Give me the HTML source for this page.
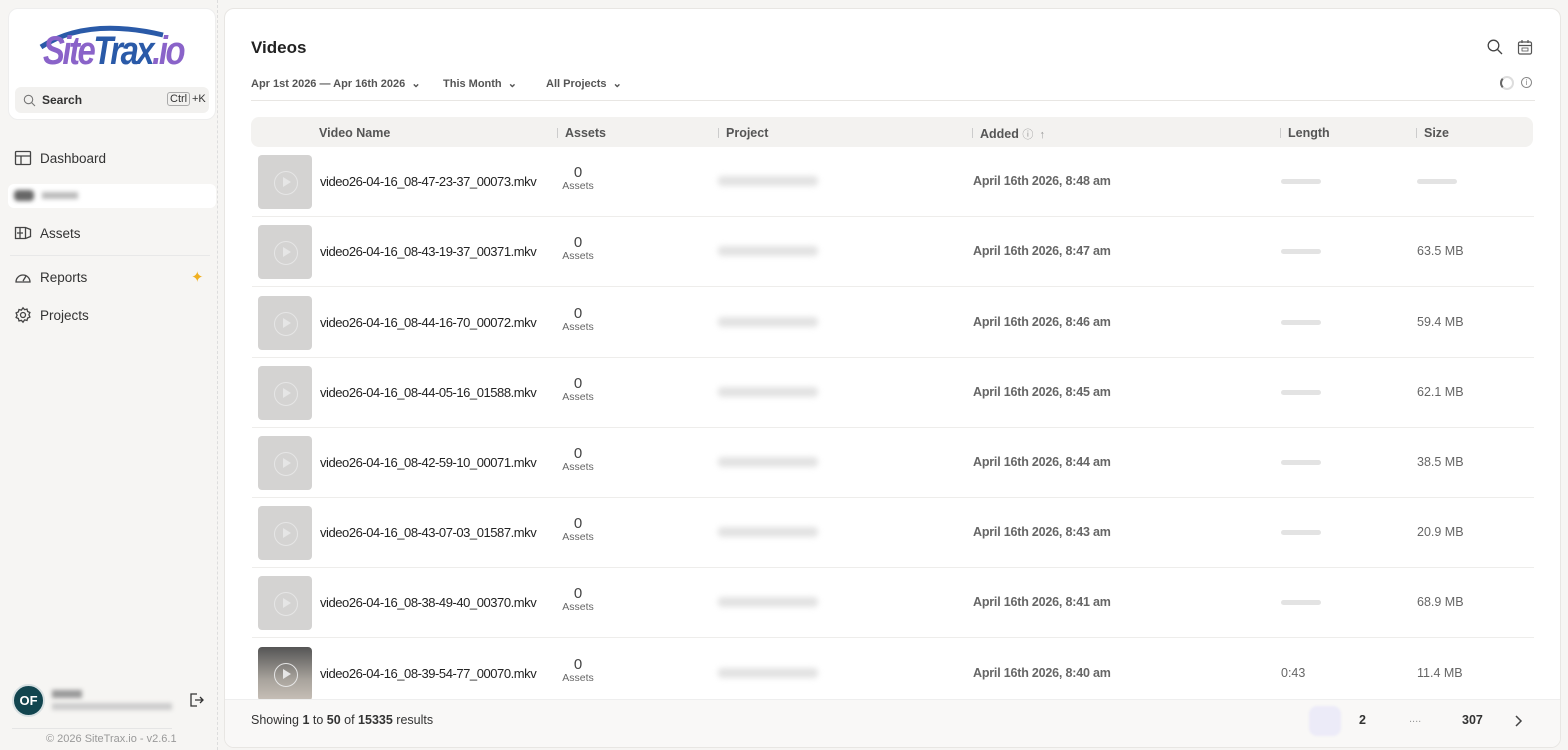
<!DOCTYPE html>
<html><head><meta charset="utf-8"><style>
*{box-sizing:border-box;margin:0;padding:0}
body{width:1568px;height:750px;overflow:hidden;background:#f6f5f3;font-family:"Liberation Sans",sans-serif;color:#222;position:relative}
.side{position:absolute;left:0;top:0;width:218px;height:750px;border-right:1px dashed #ddd}
.card{position:absolute;left:8px;top:8px;width:208px;height:112px;background:#fff;border-radius:10px;border:1px solid #eee}
.search{position:absolute;left:6px;top:78px;width:194px;height:26px;background:#f2f1ef;border-radius:6px;font-size:12px;font-weight:bold;color:#333}
.nav{position:absolute;left:14px;font-size:13.5px;color:#333;display:flex;align-items:center;gap:8px}
.nav svg{width:18px;height:18px;fill:none;stroke:#444;stroke-width:1.3}
.main{position:absolute;left:224px;top:8px;width:1337px;height:740px;background:#fff;border:1px solid #e8e6e3;border-radius:10px;overflow:hidden}
.abs{position:absolute}
.row{position:absolute;left:27px;width:1282px;height:70px;border-bottom:1px solid #eeedeb}
.th{position:absolute;left:6px;top:8px;width:54px;height:54px;background:#d4d3d2;border-radius:4px}
.th:after{content:"";position:absolute;left:16px;top:16px;width:22px;height:22px;border:1.5px solid #e6e6e6;border-radius:50%}
.tri{position:absolute;left:25px;top:22px;width:8px;height:10px;background:#e6e6e6;clip-path:polygon(0 0,100% 50%,0 100%)}
.nm{position:absolute;left:68px;top:27px;font-size:13px;color:#222;letter-spacing:-0.45px}
.as{position:absolute;left:306px;top:19px;width:40px;text-align:center;font-size:15px;color:#444;line-height:14px}
.as small{display:block;font-size:10.5px;color:#666;line-height:13px}
.pj{position:absolute;left:466px;top:29px;width:100px;height:10px;background:#e2e2e2;border-radius:4px;filter:blur(3px)}
.ad{position:absolute;left:721px;top:27px;font-size:12.5px;font-weight:bold;color:#666;letter-spacing:-0.2px}
.ln{position:absolute;left:1029px;top:32px;width:40px;height:5px;background:#e3e3e3;border-radius:3px}
.sz{position:absolute;left:1165px;top:27px;font-size:12.5px;color:#666}
.hd{position:absolute;top:117px;font-size:12.5px;font-weight:bold;color:#555}
.sep{position:absolute;top:119px;width:1px;height:10px;background:#ccc}
</style></head><body>
<div class="side">
 <div class="card">
  <div class="abs" style="left:28px;top:8px;width:160px;height:64px">
   <svg width="160" height="64" viewBox="0 0 160 64" class="abs" style="left:0;top:0"><path d="M4 30 Q50 0 126 18" stroke="#2a5aa8" stroke-width="5" fill="none"/></svg>
   <div class="abs" style="left:6px;top:12px;font-size:40px;font-weight:bold;font-style:italic;letter-spacing:-3px;transform:scaleX(.82);transform-origin:left;white-space:nowrap"><span style="color:#8a63c9">Site</span><span style="color:#2a5aa8">Trax</span><span style="color:#8a63c9">.io</span></div>
  </div>
  <div class="search"><svg class="abs" style="left:8px;top:7px" width="13" height="13" viewBox="0 0 13 13"><circle cx="5.5" cy="5.5" r="4.2" fill="none" stroke="#777" stroke-width="1.1"/><path d="M8.6 8.6L12 12" stroke="#777" stroke-width="1.1"/></svg><span class="abs" style="left:27px;top:6px">Search</span><span class="abs" style="left:152px;top:5px;font-weight:normal;font-size:11px;border:1px solid #aaa;border-radius:3px;padding:0 2px">Ctrl</span><span class="abs" style="left:177px;top:6px;font-size:11px;font-weight:normal">+K</span></div>
 </div>
 <div class="nav" style="top:149px"><svg viewBox="0 0 18 18"><rect x="1.5" y="2.5" width="15" height="13" rx="1"/><path d="M1.5 7h15M7 7v8.5"/></svg>Dashboard</div>
 <div class="abs" style="left:8px;top:184px;width:208px;height:24px;background:#fff;border-radius:6px"><div class="abs" style="left:6px;top:6px;width:20px;height:11px;background:#666;border-radius:4px;filter:blur(2px)"></div><div class="abs" style="left:34px;top:8px;width:36px;height:7px;background:#bbb;filter:blur(2px)"></div></div>
 <div class="nav" style="top:224px"><svg viewBox="0 0 18 18"><path d="M1.5 3.5h10l5 2v7l-5 2h-10z M11.5 3.5v11M6 3.5v11M3 9h6"/></svg>Assets</div>
 <div class="abs" style="left:10px;top:255px;width:200px;border-top:1px solid #e8e8e8"></div>
 <div class="nav" style="top:268px"><svg viewBox="0 0 18 18"><path d="M2 14a7 7 0 0 1 14 0z M9 13l3-5"/></svg>Reports</div>
 <div class="abs" style="left:191px;top:268px;color:#f0b020;font-size:15px">✦</div>
 <div class="nav" style="top:306px"><svg viewBox="0 0 18 18"><circle cx="9" cy="9" r="2.5"/><path d="M9 1.8l1.6 1.9 2.4-.6.6 2.4 2.3 1-1 2.3 1 2.3-2.3 1-.6 2.4-2.4-.6L9 16.2l-1.6-1.9-2.4.6-.6-2.4-2.3-1 1-2.3-1-2.3 2.3-1 .6-2.4 2.4.6z"/></svg>Projects</div>
 <div class="abs" style="left:12px;top:684px;width:33px;height:33px;border-radius:50%;background:#12454f;border:2px solid #d8e0e2;color:#fff;font-weight:bold;font-size:13px;text-align:center;line-height:29px">OF</div>
 <div class="abs" style="left:52px;top:690px;width:30px;height:8px;background:#999;filter:blur(2px)"></div>
 <div class="abs" style="left:52px;top:703px;width:120px;height:7px;background:#ccc;filter:blur(2px)"></div>
 <svg class="abs" style="left:188px;top:692px" width="16" height="16" viewBox="0 0 16 16" fill="none" stroke="#333" stroke-width="1.3"><path d="M9 2H3v12h6M7 8h8M12 5l3 3-3 3"/></svg>
 <div class="abs" style="left:12px;top:728px;width:160px;border-top:1px solid #e5e5e5"></div>
 <div class="abs" style="left:46px;top:733px;font-size:11px;color:#999">© 2026 SiteTrax.io - v2.6.1</div>
</div>
<div class="main">
 <div class="abs" style="left:26px;top:29px;font-size:17px;font-weight:bold;color:#222">Videos</div>
 <svg class="abs" style="left:1262px;top:30px" width="16" height="16" viewBox="0 0 16 16" fill="none" stroke="#444" stroke-width="1.3"><circle cx="6.5" cy="6.5" r="5.3"/><path d="M10.5 10.5L15 15"/></svg>
 <svg class="abs" style="left:1292px;top:30px" width="16" height="16" viewBox="0 0 16 16" fill="none" stroke="#555" stroke-width="1.2"><rect x="1.5" y="3" width="13" height="12" rx="1.5"/><path d="M1.5 6.5h13M5 1v3M11 1v3"/><rect x="5" y="9" width="6" height="3" stroke-width=".8"/></svg>
 <div class="abs" style="left:1275px;top:67px;width:14px;height:14px;border:2px solid #ddd;border-left-color:#666;border-radius:50%"></div>
 <div class="abs" style="left:1296px;top:68px;width:11px;height:11px;border:1px solid #888;border-radius:50%;font-size:8px;text-align:center;line-height:9px;color:#888">i</div>
 <div class="abs" style="left:26px;top:68px;font-size:11px;font-weight:bold;color:#555">Apr 1st 2026 — Apr 16th 2026 &nbsp;⌄</div>
 <div class="abs" style="left:218px;top:68px;font-size:11px;font-weight:bold;color:#555">This Month &nbsp;⌄</div>
 <div class="abs" style="left:321px;top:68px;font-size:11px;font-weight:bold;color:#555">All Projects &nbsp;⌄</div>
 <div class="abs" style="left:26px;top:91px;width:1284px;border-top:1px solid #e8e6e3"></div>
 <div class="abs" style="left:26px;top:108px;width:1282px;height:30px;background:#f3f2f0;border-radius:8px"></div>
 <div class="hd" style="left:94px">Video Name</div>
 <div class="sep" style="left:332px"></div><div class="hd" style="left:340px">Assets</div>
 <div class="sep" style="left:493px"></div><div class="hd" style="left:501px">Project</div>
 <div class="sep" style="left:747px"></div><div class="hd" style="left:755px">Added <span style="font-weight:normal;color:#999;font-size:11px">ⓘ&nbsp; ↑</span></div>
 <div class="sep" style="left:1055px"></div><div class="hd" style="left:1063px">Length</div>
 <div class="sep" style="left:1191px"></div><div class="hd" style="left:1199px">Size</div>
 <div class="row" style="top:138px"><div class="th"><div class="tri"></div></div><div class="nm">video26-04-16_08-47-23-37_00073.mkv</div><div class="as">0<small>Assets</small></div><div class="pj"></div><div class="ad">April 16th 2026, 8:48 am</div><div class="ln"></div><div class="ln" style="left:1165px"></div></div>
 <div class="row" style="top:208px"><div class="th"><div class="tri"></div></div><div class="nm">video26-04-16_08-43-19-37_00371.mkv</div><div class="as">0<small>Assets</small></div><div class="pj"></div><div class="ad">April 16th 2026, 8:47 am</div><div class="ln"></div><div class="sz">63.5 MB</div></div>
 <div class="row" style="top:279px"><div class="th"><div class="tri"></div></div><div class="nm">video26-04-16_08-44-16-70_00072.mkv</div><div class="as">0<small>Assets</small></div><div class="pj"></div><div class="ad">April 16th 2026, 8:46 am</div><div class="ln"></div><div class="sz">59.4 MB</div></div>
 <div class="row" style="top:349px"><div class="th"><div class="tri"></div></div><div class="nm">video26-04-16_08-44-05-16_01588.mkv</div><div class="as">0<small>Assets</small></div><div class="pj"></div><div class="ad">April 16th 2026, 8:45 am</div><div class="ln"></div><div class="sz">62.1 MB</div></div>
 <div class="row" style="top:419px"><div class="th"><div class="tri"></div></div><div class="nm">video26-04-16_08-42-59-10_00071.mkv</div><div class="as">0<small>Assets</small></div><div class="pj"></div><div class="ad">April 16th 2026, 8:44 am</div><div class="ln"></div><div class="sz">38.5 MB</div></div>
 <div class="row" style="top:489px"><div class="th"><div class="tri"></div></div><div class="nm">video26-04-16_08-43-07-03_01587.mkv</div><div class="as">0<small>Assets</small></div><div class="pj"></div><div class="ad">April 16th 2026, 8:43 am</div><div class="ln"></div><div class="sz">20.9 MB</div></div>
 <div class="row" style="top:559px"><div class="th"><div class="tri"></div></div><div class="nm">video26-04-16_08-38-49-40_00370.mkv</div><div class="as">0<small>Assets</small></div><div class="pj"></div><div class="ad">April 16th 2026, 8:41 am</div><div class="ln"></div><div class="sz">68.9 MB</div></div>
 <div class="row" style="top:630px"><div class="th" style="background:linear-gradient(#555,#a8a39c 60%,#c8c0b8)"><div class="tri"></div></div><div class="nm">video26-04-16_08-39-54-77_00070.mkv</div><div class="as">0<small>Assets</small></div><div class="pj"></div><div class="ad">April 16th 2026, 8:40 am</div><div class="sz" style="left:1029px">0:43</div><div class="sz">11.4 MB</div></div>
 <div class="abs" style="left:0;top:690px;width:1337px;height:50px;background:#f9f8f7;border-top:1px solid #eee"></div>
 <div class="abs" style="left:26px;top:704px;font-size:12.5px;color:#333">Showing <b>1</b> to <b>50</b> of <b>15335</b> results</div>
 <div class="abs" style="left:1084px;top:697px;width:32px;height:30px;background:#ecebf8;border-radius:8px;filter:blur(1px)"></div>
 <div class="abs" style="left:1134px;top:704px;font-size:12.5px;font-weight:bold;color:#333">2</div>
 <div class="abs" style="left:1184px;top:704px;font-size:11px;color:#999">....</div>
 <div class="abs" style="left:1237px;top:704px;font-size:12.5px;font-weight:bold;color:#333">307</div>
 <svg class="abs" style="left:1288px;top:705px" width="10" height="14" viewBox="0 0 10 14" fill="none" stroke="#444" stroke-width="1.5"><path d="M3 2l5 5-5 5"/></svg>
</div>
</body></html>
